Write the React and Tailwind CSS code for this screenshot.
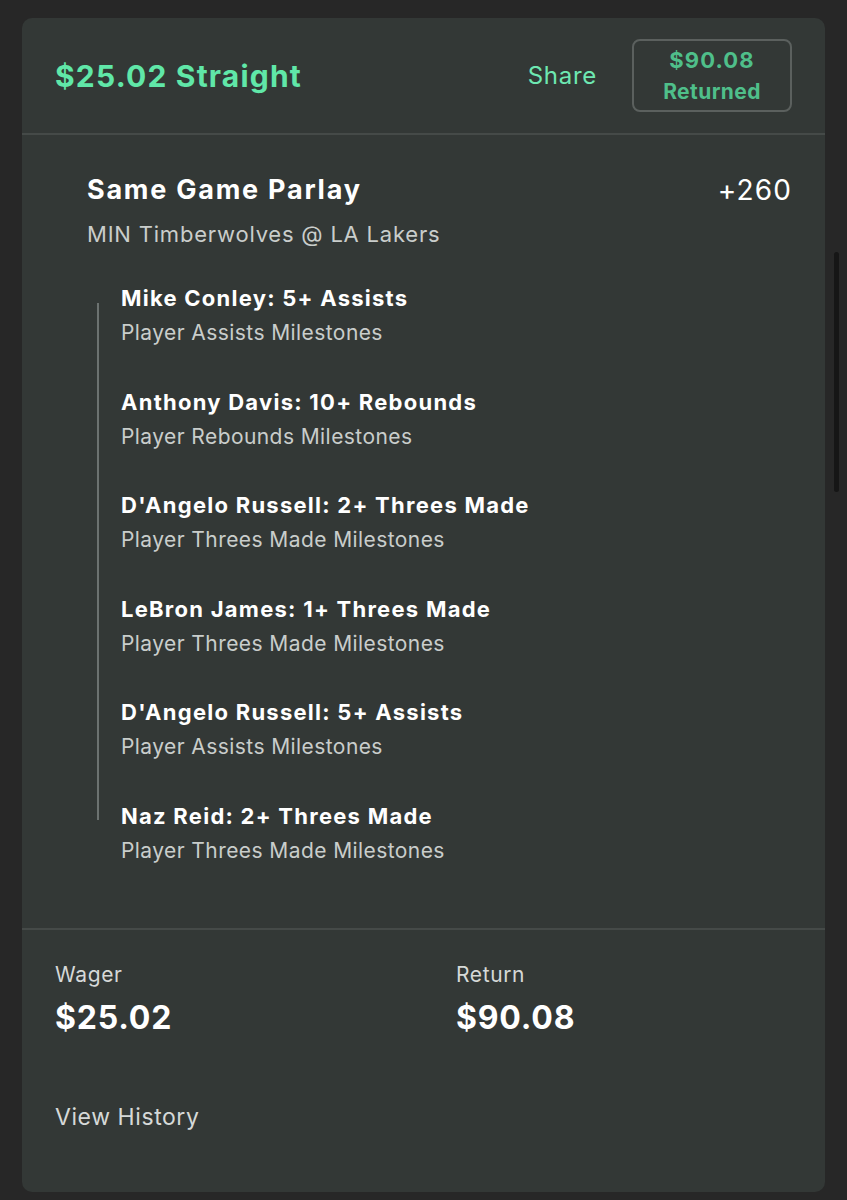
const legs = [
    { title: "Mike Conley: 5+ Assists", market: "Player Assists Milestones" },
    { title: "Anthony Davis: 10+ Rebounds", market: "Player Rebounds Milestones" },
    { title: "D'Angelo Russell: 2+ Threes Made", market: "Player Threes Made Milestones" },
    { title: "LeBron James: 1+ Threes Made", market: "Player Threes Made Milestones" },
    { title: "D'Angelo Russell: 5+ Assists", market: "Player Assists Milestones" },
    { title: "Naz Reid: 2+ Threes Made", market: "Player Threes Made Milestones" },
];

export default function App() {
    return (
        <div
            className="relative min-h-[1200px] bg-[#272727] pt-[18px] px-[22px]"
            style={{ fontFamily: "Inter, 'Noto Sans', sans-serif" }}
        >
            {/* Bet card */}
            <div className="w-[803px] h-[1174px] rounded-[10px] bg-[#333836] flex flex-col overflow-hidden">
                {/* Header */}
                <div className="h-[117px] flex items-center justify-between pl-[33px] pr-[33px] border-b-2 border-[#454a48]">
                    <h1 className="text-[30px] leading-[36px] font-bold tracking-[0.04em] text-[#60e7a8]">
                        $25.02 Straight
                    </h1>
                    <div className="flex items-center">
                        <span className="text-[24px] leading-[30px] tracking-[0.03em] text-[#6ee8b2] mr-[35px]">
                            Share
                        </span>
                        <div className="w-[160px] h-[73px] rounded-[8px] border-2 border-[#5b605e] flex flex-col items-center justify-center">
                            <span className="text-[22px] leading-[31px] font-bold tracking-[0.05em] text-[#4fbf8a]">$90.08</span>
                            <span className="text-[21px] leading-[31px] font-bold tracking-[0.02em] text-[#4fbf8a]">Returned</span>
                        </div>
                    </div>
                </div>

                {/* Parlay */}
                <div className="flex-1 pt-[39px]">
                    <div className="flex items-start justify-between pl-[65px] pr-[33px]">
                        <h2 className="text-[27px] leading-[32px] font-bold tracking-[0.065em] text-white">
                            Same Game Parlay
                        </h2>
                        <span className="text-[28px] leading-[32px] tracking-[0.04em] text-white">+260</span>
                    </div>
                    <p className="pl-[65px] mt-[14px] text-[22px] leading-[28px] tracking-[0.036em] text-[#c9cdcb]">
                        MIN Timberwolves @ LA Lakers
                    </p>

                    <div className="flex items-start mt-[36px]">
                        <div className="ml-[75px] mt-[19px] w-[2px] h-[517px] bg-[#6c7270]" />
                        <ul className="ml-[22px] flex flex-col gap-[40.5px]">
                            {legs.map((leg, i) => (
                                <li key={i}>
                                    <div className="text-[22px] leading-[28px] font-bold tracking-[0.057em] text-white">
                                        {leg.title}
                                    </div>
                                    <div className="mt-[7px] text-[21px] leading-[28px] tracking-[0.02em] text-[#c9cdcb]">
                                        {leg.market}
                                    </div>
                                </li>
                            ))}
                        </ul>
                    </div>
                </div>

                {/* Footer */}
                <div className="h-[264px] border-t-2 border-[#454a48] pt-[31px] pl-[33px]">
                    <div className="flex">
                        <div className="w-[401px]">
                            <div className="text-[21px] leading-[28px] tracking-[0.03em] text-[#d6d9d8]">Wager</div>
                            <div className="mt-[10px] text-[32px] leading-[38px] font-bold tracking-[0.025em] text-white">$25.02</div>
                        </div>
                        <div>
                            <div className="text-[21px] leading-[28px] tracking-[0.03em] text-[#d6d9d8]">Return</div>
                            <div className="mt-[10px] text-[32px] leading-[38px] font-bold tracking-[0.025em] text-white">$90.08</div>
                        </div>
                    </div>
                    <button className="mt-[65px] text-[23px] leading-[30px] tracking-[0.025em] text-[#d6d9d8]">
                        View History
                    </button>
                </div>
            </div>

            {/* scroll indicator */}
            <div className="absolute left-[834px] top-[252px] w-[5px] h-[240px] rounded-full bg-[#161616]" />
        </div>
    );
}
